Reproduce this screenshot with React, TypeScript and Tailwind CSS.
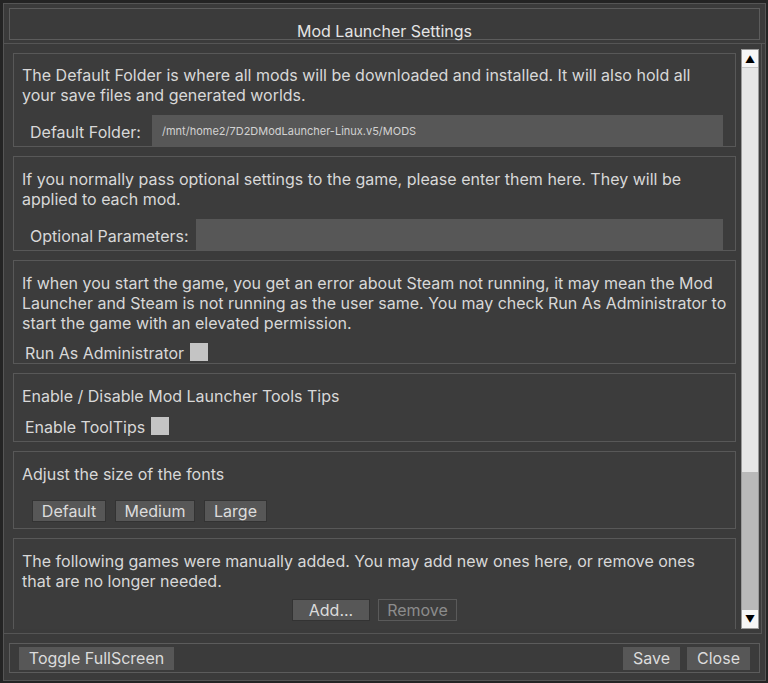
import React from "react";

const font = { fontFamily: "Inter, 'Noto Sans', sans-serif" };

function Section({ className, children }: { className: string; children: React.ReactNode }) {
  return (
    <div className={`shrink-0 border border-[#585858] bg-[#3c3c3c] ${className}`}>{children}</div>
  );
}

function Check() {
  return <span className="inline-block w-[18px] h-[18px] bg-[#c4c4c4]" />;
}

function Btn({ children, className = "" }: { children: React.ReactNode; className?: string }) {
  return (
    <button
      className={`h-[22px] flex items-center justify-center bg-[#575757] border border-[#333] text-[16px] text-[#dcdcdc] leading-none ${className}`}
    >
      {children}
    </button>
  );
}

export default function App() {
  return (
    <div className="w-[768px] h-[683px] bg-[#242424] pt-[3px] pl-[3px] overflow-hidden" style={font}>
      <div className="w-[763px] h-[678px] border border-[#555] bg-[#3b3b3b] flex flex-col text-[#d8d8d8]">
        {/* title */}
        <div className="h-[40px] shrink-0 border-b border-[#555] pt-[4px] px-[5px]">
          <div className="h-[32px] border border-[#5c5c5c] flex items-center justify-center text-[16px] text-[#e4e4e4] pt-[13px]">
            Mod Launcher Settings
          </div>
        </div>

        {/* scroll area */}
        <div className="flex-1 min-h-0 mr-[3px] border-r border-b border-[#555] flex pt-[5px] pb-[4px] pl-[9px] pr-[2px]">
          <div className="flex-1 min-w-0 overflow-hidden flex flex-col gap-[9px] pt-[4px] pr-[5px] text-[16px] leading-[20px]">
            <Section className="h-[94px] flex flex-col">
              <p className="px-[8px] pt-[11px]">
                The Default Folder is where all mods will be downloaded and installed. It will also hold all
                your save files and generated worlds.
              </p>
              <div className="mt-auto flex items-center pr-[12px]">
                <span className="pl-[16px] w-[138px] shrink-0 pt-[2px]">Default Folder:</span>
                <div className="flex-1 h-[31px] bg-[#575757] flex items-center pl-[10px] text-[11px] text-[#d2d2d2]">
                  /mnt/home2/7D2DModLauncher-Linux.v5/MODS
                </div>
              </div>
            </Section>

            <Section className="h-[95px] flex flex-col">
              <p className="px-[8px] pt-[12px]">
                If you normally pass optional settings to the game, please enter them here. They will be
                applied to each mod.
              </p>
              <div className="mt-auto flex items-center pr-[12px]">
                <span className="pl-[16px] w-[182px] shrink-0 pt-[2px]">Optional Parameters:</span>
                <div className="flex-1 h-[31px] bg-[#575757]" />
              </div>
            </Section>

            <Section className="h-[104px] flex flex-col">
              <p className="px-[8px] pt-[12px]">
                If when you start the game, you get an error about Steam not running, it may mean the Mod
                Launcher and Steam is not running as the user same. You may check Run As Administrator to
                start the game with an elevated permission.
              </p>
              <div className="mt-auto flex items-center gap-[6px] pl-[11px]">
                <span className="pt-[3px]">Run As Administrator</span>
                <Check />
              </div>
            </Section>

            <Section className="h-[69px] flex flex-col">
              <p className="px-[8px] pt-[12px]">Enable / Disable Mod Launcher Tools Tips</p>
              <div className="mt-auto mb-[4px] flex items-center gap-[6px] pl-[11px]">
                <span className="pt-[3px]">Enable ToolTips</span>
                <Check />
              </div>
            </Section>

            <Section className="h-[78px] flex flex-col">
              <p className="px-[8px] pt-[12px]">Adjust the size of the fonts</p>
              <div className="mt-auto mb-[6px] flex items-center gap-[9px] pl-[18px]">
                <Btn className="w-[74px]">Default</Btn>
                <Btn className="w-[80px]">Medium</Btn>
                <Btn className="w-[63px]">Large</Btn>
              </div>
            </Section>

            <Section className="h-[110px] flex flex-col">
              <p className="px-[8px] pt-[12px]">
                The following games were manually added. You may add new ones here, or remove ones
                <br />
                that are no longer needed.
              </p>
              <div className="mt-[8px] flex items-center gap-[8px] pl-[278px]">
                <Btn className="w-[78px]">Add...</Btn>
                <button className="h-[22px] w-[79px] border border-[#5a5a5a] text-[16px] text-[#8c8c8c] leading-none">
                  Remove
                </button>
              </div>
            </Section>
          </div>

          {/* scrollbar */}
          <div className="w-[18px] shrink-0 flex flex-col border border-[#9a9a9a] bg-[#e6e6e6]">
            <div className="h-[18px] shrink-0 bg-[#f6f6f6] border-b border-[#c8c8c8] flex items-center justify-center text-[10px] text-black leading-none">
              ▲
            </div>
            <div className="flex-1" />
            <div className="h-[138px] shrink-0 bg-[#b9b9b9]" />
            <div className="h-[18px] shrink-0 bg-[#f6f6f6] flex items-center justify-center text-[10px] text-black leading-none">
              ▼
            </div>
          </div>
        </div>

        {/* footer */}
        <div className="flex-1 max-h-[46px] px-[5px] pt-[9px]">
          <div className="h-[30px] border border-[#5c5c5c] flex items-center justify-between px-[9px]">
            <Btn className="w-[155px] h-[23px] border-0">Toggle FullScreen</Btn>
            <div className="flex gap-[7px]">
              <Btn className="w-[57px] h-[23px] border-0">Save</Btn>
              <Btn className="w-[63px] h-[23px] border-0">Close</Btn>
            </div>
          </div>
        </div>
      </div>
    </div>
  );
}
